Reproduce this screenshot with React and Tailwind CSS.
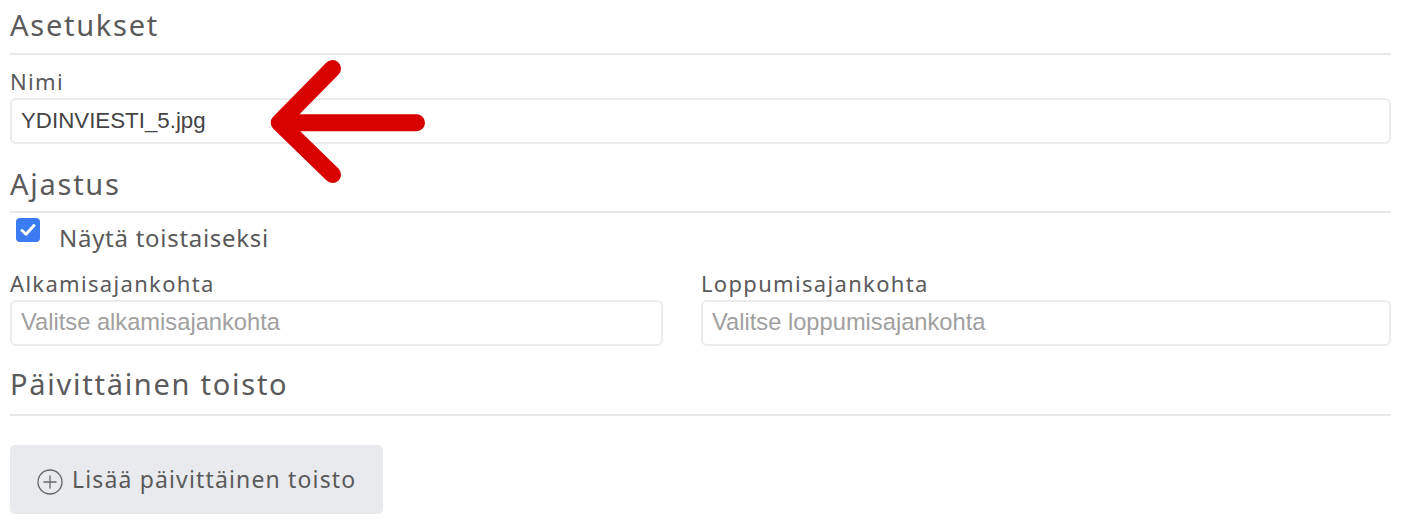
function Heading({ children, pb }) {
  return (
    <div className={`border-b-2 border-[#e8e8e8] ${pb}`}>
      <h2 className="text-[29px] leading-[36px] tracking-[0.06em] text-[#5a5a5a]">{children}</h2>
    </div>
  )
}

function Field({ label, placeholder, value }) {
  return (
    <div className="flex flex-col">
      <label className="text-[22px] leading-[28px] tracking-[0.06em] text-[#5a5a5a]">{label}</label>
      <input
        readOnly
        value={value}
        placeholder={placeholder}
        className="mt-[3px] h-[46px] w-full rounded-[6px] border-2 border-[#ebebeb] bg-white px-[9px] text-[22.3px] text-[#444] outline-none placeholder:text-[23.7px] placeholder:text-[#a0a0a0]"
        style={{ fontFamily: '"Liberation Sans", Arial, sans-serif' }}
      />
    </div>
  )
}

function Arrow() {
  return (
    <svg className="absolute left-0 top-0" width="440" height="200" viewBox="0 0 440 200">
      <g stroke="#d90000" strokeWidth="17" strokeLinecap="round" strokeLinejoin="round" fill="none">
        <path d="M416.5 122.7 H280" />
        <path d="M332.5 68.5 L279.2 122.7 L332.5 174.5" />
      </g>
    </svg>
  )
}

export default function App() {
  return (
    <div className="relative h-[530px] bg-white pl-[10px] pr-[35px] pt-[7px]" style={{ fontFamily: '"Noto Sans", sans-serif' }}>
      <Heading pb="pb-[10px]">Asetukset</Heading>
      <div className="mt-[12px]">
        <Field label="Nimi" value="YDINVIESTI_5.jpg" />
      </div>
      <div className="mt-[22px]">
        <Heading pb="pb-[9px]">Ajastus</Heading>
      </div>
      <div className="mt-[5px] flex items-start gap-[19px] pl-[6px]">
        <span className="flex h-[24px] w-[24px] items-center justify-center rounded-[4px] bg-[#3b7cf2]">
          <svg width="20" height="20" viewBox="0 0 16 16">
            <path d="M3.2 8.4 L6.4 11.4 L12.8 4.4" stroke="white" strokeWidth="2.4" fill="none" strokeLinecap="round" strokeLinejoin="round" />
          </svg>
        </span>
        <span className="mt-[2px] text-[24px] leading-[36px] tracking-[0.03em] text-[#5a5a5a]">Näytä toistaiseksi</span>
      </div>
      <div className="mt-[13px] grid grid-cols-[653px_1fr] gap-[38px]">
        <Field label="Alkamisajankohta" placeholder="Valitse alkamisajankohta" value="" />
        <Field label="Loppumisajankohta" placeholder="Valitse loppumisajankohta" value="" />
      </div>
      <div className="mt-[20px]">
        <Heading pb="pb-[12px]">Päivittäinen toisto</Heading>
      </div>
      <button
        type="button"
        className="mt-[29px] flex h-[69px] w-[373px] items-center gap-[9px] rounded-[5px] bg-[#e9eaed] pl-[27px] text-[23px] tracking-[0.05em] text-[#5a5a5a]"
      >
        <svg className="mt-[4px]" width="26" height="26" viewBox="0 0 26 26" fill="none" stroke="#666" strokeWidth="1.3">
          <circle cx="13" cy="13" r="12" />
          <path d="M13 6.5 V19.5 M6.5 13 H19.5" />
        </svg>
        Lisää päivittäinen toisto
      </button>
      <Arrow />
    </div>
  )
}
